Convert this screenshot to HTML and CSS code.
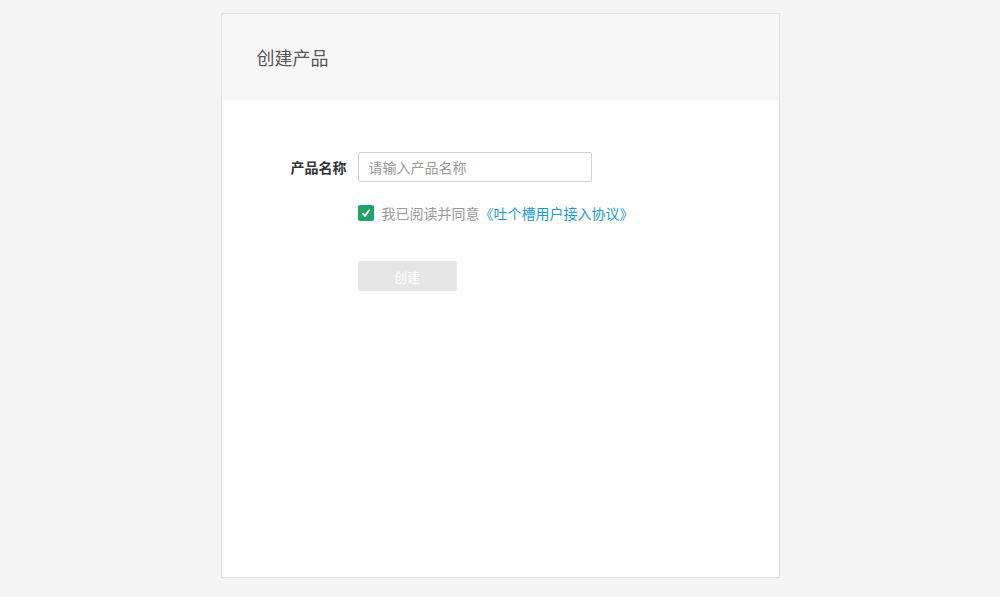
FILE: index.html
```html
<!DOCTYPE html>
<html lang="zh-CN">
<head>
  <meta charset="UTF-8">
  <title>创建产品</title>
  <link rel="stylesheet" href="styles.css">
</head>
<body>
  <div class="panel">
    <div class="panel-head">创建产品</div>

    <div class="panel-body">
      <div class="form-row">
        <label class="form-label" for="product-name">产品名称</label>
        <input type="text" id="product-name" class="form-input" placeholder="请输入产品名称">
      </div>

      <div class="form-row agree-row">
        <span class="form-label"></span>
        <span class="checkbox">
          <svg width="10" height="10" viewBox="0 0 10 10">
            <path d="M1.5 5.2 L4 7.8 L8.6 1.8" fill="none" stroke="#fff" stroke-width="1.8"/>
          </svg>
        </span>
        <span class="agree-text">我已阅读并同意<a href="#" class="agree-link">《吐个槽用户接入协议》</a></span>
      </div>

      <div class="form-row submit-row">
        <span class="form-label"></span>
        <button class="btn-create" disabled>创建</button>
      </div>
    </div>
  </div>
</body>
</html>
```

FILE: styles.css
```css
body {
  margin: 0;
  background-color: #f4f4f4;
  font-family: "Noto Sans CJK SC", "Noto Sans", sans-serif;
  height: 597px;
  display: flex;
  justify-content: center;
  padding-top: 13px;
  box-sizing: border-box;
}

.panel {
  width: 559px;
  height: 565px;
  background-color: #fff;
  border: 1px solid #e2e2e2;
  box-sizing: border-box;
}

.panel-head {
  height: 86px;
  background-color: #f7f7f7;
  padding-left: 35px;
  display: flex;
  align-items: center;
  font-size: 18px;
  color: #555;
}

.panel-body {
  padding-top: 52px;
}

.form-row {
  display: flex;
  align-items: center;
}

.form-label {
  width: 125px;
  text-align: right;
  padding-right: 11px;
  font-size: 14px;
  font-weight: bold;
  color: #333;
  flex-shrink: 0;
}

.form-input {
  width: 234px;
  height: 30px;
  box-sizing: border-box;
  border: 1px solid #d2d2d2;
  border-radius: 2px;
  padding: 0 10px;
  font-family: inherit;
  font-size: 14px;
  color: #333;
  outline: none;
}

.form-input::placeholder {
  color: #999;
}

.agree-row {
  margin-top: 21px;
  height: 20px;
}

.checkbox {
  width: 16px;
  height: 16px;
  background-color: #21a366;
  border-radius: 2px;
  display: flex;
  align-items: center;
  justify-content: center;
  margin-right: 8px;
}

.agree-text {
  font-size: 14px;
  color: #999;
}

.agree-link {
  color: #1c9ad6;
  text-decoration: none;
}

.submit-row {
  margin-top: 38px;
}

.btn-create {
  width: 99px;
  height: 30px;
  border: none;
  border-radius: 2px;
  background-color: #e6e6e6;
  color: #fff;
  font-family: inherit;
  font-size: 13px;
}
```
